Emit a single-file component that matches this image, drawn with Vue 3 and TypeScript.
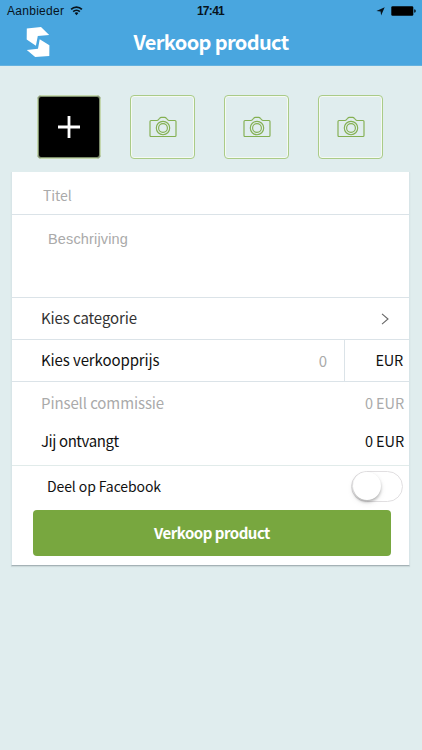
<script setup lang="ts">
import { ref } from 'vue'

const photoSlots = ref<number[]>([1, 2, 3])
const shareOnFacebook = ref<boolean>(false)
</script>

<template>
  <div class="screen">
    <header class="header">
      <div class="status">
        <div class="carrier">
          <span>Aanbieder</span>
          <svg class="wifi" width="13" height="10" viewBox="0 0 12 10" fill="none" stroke="#07131c" stroke-width="1.7">
            <path d="M.6 3.3C3.5.3 8.5.3 11.4 3.3M2.7 5.6c1.8-1.8 4.8-1.8 6.6 0" />
            <path d="M4.1 7.1c1.1-1 2.7-1 3.8 0L6 9.2z" fill="#07131c" stroke="none" />
          </svg>
        </div>
        <span class="time">17:41</span>
        <div class="indicators">
          <svg width="9" height="9" viewBox="0 0 9 9"><path d="M8.7.3 5.1 8.5 4.6 4.5.4 4.1z" fill="#07131c" /></svg>
          <svg width="25" height="10" viewBox="0 0 25 10">
            <rect x=".3" y=".2" width="22" height="9.6" rx="1.3" fill="#000" />
            <path d="M23.2 3.2q1.6.2 1.6 1.8t-1.6 1.8z" fill="#07131c" />
          </svg>
        </div>
      </div>
      <div class="bar">
        <svg class="logo" width="24" height="32" viewBox="0 0 24 32" fill="#fff">
          <path d="M.8 2.5 15 .9 23.2 8.9 11.8 9.9 9.9 19.7.7 13.6z" />
          <path d="M13.7 13.2 23.4 19.2 23.3 30.1 9.2 31 .8 24 12 22.7z" />
        </svg>
        <h1 class="title"><span>Verkoop product</span></h1>
      </div>
    </header>

    <div class="photos">
      <button class="photo add" aria-label="+">
        <svg width="22" height="22" viewBox="0 0 22 22" stroke="#fff" stroke-width="2.8"><path d="M11 0v22M0 11h22" /></svg>
      </button>
      <button v-for="slot in photoSlots" :key="slot" class="photo">
        <svg width="28" height="22" viewBox="0 0 28 22" fill="none" stroke="#84b052" stroke-width="1.15">
          <path d="M2 4.5h5.8q1.2 0 1.8-1l1-1.2q.7-.9 1.8-.9h3.2q1.1 0 1.8.9l1 1.2q.7 1 1.8 1H26q1 0 1 1v14q0 1-1 1H2q-1 0-1-1v-14q0-1 1-1z" />
          <circle cx="14" cy="12" r="6.7" />
          <circle cx="14" cy="12" r="4.4" />
        </svg>
      </button>
    </div>

    <main class="card">
      <div class="row field"><span class="t titel">Titel</span></div>
      <div class="row description"><span>Beschrijving</span></div>
      <div class="row category">
        <span class="t">Kies categorie</span>
        <svg width="8" height="12" viewBox="0 0 8 12" fill="none" stroke="#666" stroke-width="1.1"><path d="M1 .9 7 6 1 11.1" /></svg>
      </div>
      <div class="row price">
        <span class="t">Kies verkoopprijs</span>
        <span class="t amount">0</span>
        <span class="t currency">EUR</span>
      </div>
      <div class="totals">
        <div class="line muted"><span class="t">Pinsell commissie</span><span class="t eur">0 EUR</span></div>
        <div class="line"><span class="t ontvangt">Jij ontvangt</span><span class="t eur">0 EUR</span></div>
      </div>
      <div class="share">
        <span class="t deel">Deel op Facebook</span>
        <button class="toggle" :class="{ on: shareOnFacebook }" role="switch" :aria-checked="shareOnFacebook" @click="shareOnFacebook = !shareOnFacebook">
          <span class="knob"></span>
        </button>
      </div>
      <button class="submit"><span>Verkoop product</span></button>
    </main>
  </div>
</template>

<style>
body { background: #e0edee; }
</style>

<style scoped>
* { box-sizing: border-box; }
button { padding: 0; font: inherit; }
svg { display: block; flex: none; }
.screen { width: 422px; height: 750px; overflow: hidden; background: #e0edee; font-family: "Noto Sans CJK SC", "Noto Sans", sans-serif; color: #111; }
.header { height: 66px; background: #49a6df; border-bottom: 1px solid #65b2df; }
.status { display: grid; grid-template-columns: 1fr auto 1fr; align-items: center; height: 22px; padding: 0 6px 0 7px; font: 12px/22px "Liberation Sans", sans-serif; color: #07131c; }
.carrier { display: flex; align-items: center; gap: 6px; letter-spacing: .28px; }
.time { margin-right: 2px; font-size: 12px; font-weight: 700; letter-spacing: -.7px; }
.indicators { display: flex; justify-content: flex-end; align-items: center; gap: 6px; }
.bar { display: flex; height: 43px; padding-left: 26px; align-items: flex-start; }
.logo { margin-top: 4px; }
.title { flex: 1; margin: 0 50px 0 0; text-align: center; color: #fff; font-size: 20px; font-weight: 700; line-height: 40px; letter-spacing: -.62px; }
.photos { display: flex; padding: 29px 0 0 37px; }
.photo { display: flex; align-items: center; justify-content: center; width: 65px; height: 64px; margin-left: 29px; border: 1px solid #aacb88; border-radius: 4px; background: #e0edee; box-shadow: inset 0 0 0 1px #f5faf2; }
.photo.add { width: 64px; margin: 0; background: #000; border-color: #c4d7ae; box-shadow: inset 0 0 0 1px #7b8a6a; }
.card { width: 399px; height: 394px; margin: 13px 0 0 11px; background: #fff; border: 1px solid #d8e5e8; border-top: 0; border-bottom: 1px solid #a5b2b6; box-shadow: 0 1px 1px #cddadb; }
.t { font-size: 15px; line-height: 20px; white-space: nowrap; letter-spacing: -.1px; }
.row { border-bottom: 1px solid #dbe3e8; }
.field { height: 43px; padding: 13px 0 0 31px; color: #aaa; }
.titel { display: block; font-size: 14px; }
.description { height: 83px; padding: 14px 0 0 36px; color: #aaa; font: 14.5px/20px "Liberation Sans", sans-serif; letter-spacing: .15px; }
.category { display: flex; height: 42px; padding: 0 20px 2px 29px; align-items: center; justify-content: space-between; color: #333; }
.category svg { margin-top: 2px; }
.price { display: flex; height: 42px; padding-left: 29px; align-items: center; }
.price .t:first-child { margin-bottom: 2px; }
.amount { margin-left: auto; padding-right: 17px; color: #aaa; }
.currency { width: 65px; height: 41px; padding-right: 6px; border-left: 1px solid #dbe3e8; text-align: right; font-size: 14.5px; line-height: 39px; letter-spacing: -.2px; }
.totals { height: 84px; padding: 2px 5px 0 29px; border-bottom: 1px solid #e1ebea; }
.line { display: flex; height: 38px; align-items: center; justify-content: space-between; }
.muted { color: #aaa; }
.eur { font-size: 14.5px; }
.ontvangt { letter-spacing: -.42px; }
.share { display: flex; height: 44px; padding: 0 6px 3px 35px; justify-content: space-between; align-items: center; }
.deel { margin-bottom: 1px; font-size: 14px; }
.toggle { display: flex; width: 52px; height: 31px; border: 1.5px solid #e1dfe1; border-radius: 16px; background: #fff; }
.toggle.on { justify-content: flex-end; background: #78a73f; }
.knob { width: 28px; height: 28px; margin-left: 1px; border-radius: 50%; background: #fff; box-shadow: 0 2px 3px #0004, 0 3px 7px #0001; }
.submit { display: block; width: 358px; height: 46px; margin-left: 21px; padding-bottom: 2px; border: 0; border-radius: 4px; background: #78a73f; color: #fff; font-size: 15px; font-weight: 700; letter-spacing: -.5px; }
</style>
